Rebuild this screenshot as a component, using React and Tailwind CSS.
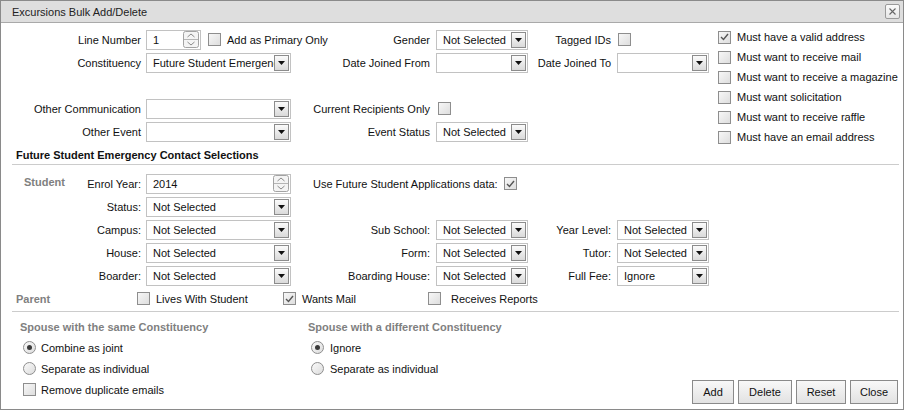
import React from 'react';

// Excursions Bulk Add/Delete dialog - static presentational form.

const DropBtn = () => (
  <div className="flex h-[16px] w-[15px] shrink-0 items-center justify-center border border-[#8c8c8c] bg-gradient-to-b from-[#fbfbfb] to-[#dadada]">
    <svg width="7" height="4" viewBox="0 0 7 4">
      <path d="M0 0h7L3.5 4z" fill="#111" />
    </svg>
  </div>
);

const Select = ({ value = '', className = 'w-[92px]' }) => (
  <div className={`flex h-[20px] items-center border border-[#c2c2c2] bg-white pl-[6px] pr-[1px] ${className}`}>
    <span className="flex-1 overflow-hidden whitespace-nowrap">{value}</span>
    <DropBtn />
  </div>
);

const SpinBtn = () => (
  <svg width="16" height="17" viewBox="0 0 16 17" className="shrink-0">
    <rect x="0.5" y="0.5" width="15" height="16" rx="2" fill="#f4f4f4" stroke="#a3a3a3" />
    <line x1="1" y1="8.5" x2="15" y2="8.5" stroke="#b5b5b5" />
    <path d="M4.5 6L8 3L11.5 6" fill="none" stroke="#8a8a8a" />
    <path d="M4.5 11L8 14L11.5 11" fill="none" stroke="#8a8a8a" />
  </svg>
);

const Spinner = ({ value, className }) => (
  <div className={`flex h-[20px] items-center border border-[#c2c2c2] bg-white pl-[6px] pr-[1px] ${className}`}>
    <span className="flex-1 whitespace-nowrap">{value}</span>
    <SpinBtn />
  </div>
);

const Check = ({ checked, className = '' }) => (
  <div className={`flex h-[13px] w-[13px] shrink-0 items-center justify-center border border-[#8e8e8e] bg-gradient-to-br from-[#f7f7f7] to-[#dedede] ${className}`}>
    {checked && (
      <svg width="9" height="8" viewBox="0 0 9 8">
        <path d="M1 4l2.5 2.5L8 1" fill="none" stroke="#555" strokeWidth="1.4" />
      </svg>
    )}
  </div>
);

const Radio = ({ checked }) => (
  <div className="flex h-[13px] w-[13px] shrink-0 items-center justify-center rounded-full border border-[#8e8e8e] bg-gradient-to-br from-[#fafafa] to-[#dcdcdc]">
    {checked && <div className="h-[5px] w-[5px] rounded-full bg-[#3a3a3a]" />}
  </div>
);

const Row = ({ children }) => (
  <div className="grid h-[23px] grid-cols-[145px_145px_145px_92px_89px_92px] items-center">{children}</div>
);

const L1 = ({ children }) => <div className="whitespace-nowrap pr-[5px] text-right">{children}</div>;
const L = ({ children }) => <div className="whitespace-nowrap pr-[6px] text-right">{children}</div>;

const musts = [
  ['Must have a valid address', true],
  ['Must want to receive mail', false],
  ['Must want to receive a magazine', false],
  ['Must want solicitation', false],
  ['Must want to receive raffle', false],
  ['Must have an email address', false],
];

export default function App() {
  return (
    <div className="flex h-[410px] w-[904px] flex-col border border-[#8a8a8a] bg-white font-['Liberation_Sans',Arial,sans-serif] text-[11px] leading-[14px] text-[#111]">
      {/* Title bar */}
      <div className="flex h-[22px] shrink-0 items-center justify-between border-b border-[#a9a9a9] bg-[#dedede] pl-[11px] pr-[3px]">
        <span className="text-[#222]">Excursions Bulk Add/Delete</span>
        <div className="flex h-[15px] w-[15px] items-center justify-center rounded-[2px] border border-[#9a9a9a] bg-gradient-to-b from-[#fbfbfb] to-[#e6e6e6]">
          <svg width="7" height="7" viewBox="0 0 7 7">
            <path d="M0.5 0.5l6 6M6.5 0.5l-6 6" stroke="#666" strokeWidth="1.1" />
          </svg>
        </div>
      </div>

      {/* Top filters */}
      <div className="flex">
        <div className="w-[708px] shrink-0 pt-[5px]">
          <Row>
            <L1>Line Number</L1>
            <div className="flex items-center whitespace-nowrap">
              <Spinner value="1" className="w-[55px] shrink-0" />
              <Check className="ml-[7px]" />
              <span className="ml-[6px]">Add as Primary Only</span>
            </div>
            <L>Gender</L>
            <Select value="Not Selected" />
            <L>Tagged IDs</L>
            <Check className="ml-[1px]" />
          </Row>
          <Row>
            <L1>Constituency</L1>
            <Select value="Future Student Emergency Contact" className="w-[145px]" />
            <L>Date Joined From</L>
            <Select />
            <L>Date Joined To</L>
            <Select />
          </Row>
          <Row />
          <Row>
            <L1>Other Communication</L1>
            <Select className="w-[145px]" />
            <L>Current Recipients Only</L>
            <Check className="ml-[2px]" />
          </Row>
          <Row>
            <L1>Other Event</L1>
            <Select className="w-[145px]" />
            <L>Event Status</L>
            <Select value="Not Selected" />
          </Row>
        </div>
        <div className="flex flex-col pl-[9px] pt-[4px]">
          {musts.map(([t, c]) => (
            <div key={t} className="flex h-[20px] items-center gap-[6px] whitespace-nowrap">
              <Check checked={c} />
              <span>{t}</span>
            </div>
          ))}
        </div>
      </div>

      {/* Section header */}
      <div className="ml-[11px] mr-[4px] h-[18px] border-b border-[#cccccc] pl-[4px] pt-[1px] font-bold">
        Future Student Emergency Contact Selections
      </div>

      {/* Student */}
      <div className="mt-[7px]">
        <Row>
          <div className="flex h-full items-start justify-between">
            <span className="pl-[23px] pt-[3px] font-bold text-[#808080]">Student</span>
            <span className="self-center pr-[5px]">Enrol Year:</span>
          </div>
          <Spinner value="2014" className="w-[145px]" />
          <div className="col-span-2 flex items-center gap-[6px] whitespace-nowrap pl-[22px]">
            <span>Use Future Student Applications data:</span>
            <Check checked />
          </div>
        </Row>
        <Row>
          <L1>Status:</L1>
          <Select value="Not Selected" className="w-[145px]" />
        </Row>
        <Row>
          <L1>Campus:</L1>
          <Select value="Not Selected" className="w-[145px]" />
          <L>Sub School:</L>
          <Select value="Not Selected" />
          <L>Year Level:</L>
          <Select value="Not Selected" />
        </Row>
        <Row>
          <L1>House:</L1>
          <Select value="Not Selected" className="w-[145px]" />
          <L>Form:</L>
          <Select value="Not Selected" />
          <L>Tutor:</L>
          <Select value="Not Selected" />
        </Row>
        <Row>
          <L1>Boarder:</L1>
          <Select value="Not Selected" className="w-[145px]" />
          <L>Boarding House:</L>
          <Select value="Not Selected" />
          <L>Full Fee:</L>
          <Select value="Ignore" />
        </Row>
        <div className="flex h-[23px] items-center whitespace-nowrap">
          <span className="w-[136px] pl-[15px] font-bold text-[#808080]">Parent</span>
          <div className="flex w-[146px] items-center gap-[6px]">
            <Check />
            <span>Lives With Student</span>
          </div>
          <div className="flex w-[145px] items-center gap-[6px]">
            <Check checked />
            <span>Wants Mail</span>
          </div>
          <div className="flex items-center gap-[10px]">
            <Check />
            <span>Receives Reports</span>
          </div>
        </div>
      </div>

      {/* Spouse options and actions */}
      <div className="ml-[11px] mr-[4px] mt-[1px] flex flex-1 border-t border-[#cccccc]">
        <div className="w-[296px] pl-[8px] pt-[8px]">
          <div className="font-bold text-[#808080]">Spouse with the same Constituency</div>
          <div className="mt-[3px] flex h-[21px] items-center gap-[5px] pl-[3px]">
            <Radio checked />
            <span>Combine as joint</span>
          </div>
          <div className="flex h-[21px] items-center gap-[5px] pl-[3px]">
            <Radio />
            <span>Separate as individual</span>
          </div>
          <div className="flex h-[21px] items-center gap-[5px] pl-[3px]">
            <Check />
            <span>Remove duplicate emails</span>
          </div>
        </div>
        <div className="flex-1 pt-[8px]">
          <div className="font-bold text-[#808080]">Spouse with a different Constituency</div>
          <div className="mt-[3px] flex h-[21px] items-center gap-[6px] pl-[3px]">
            <Radio checked />
            <span>Ignore</span>
          </div>
          <div className="flex h-[21px] items-center gap-[6px] pl-[3px]">
            <Radio />
            <span>Separate as individual</span>
          </div>
        </div>
        <div className="flex items-end gap-[4px] pb-[5px] pr-[1px]">
          {[
            ['Add', 'w-[42px]'],
            ['Delete', 'w-[54px]'],
            ['Reset', 'w-[50px]'],
            ['Close', 'w-[48px]'],
          ].map(([t, w]) => (
            <button
              key={t}
              className={`h-[24px] ${w} border border-[#8a8a8a] bg-gradient-to-b from-[#f8f8f8] to-[#e2e2e2] text-[11px] text-[#111]`}
            >
              {t}
            </button>
          ))}
        </div>
      </div>
    </div>
  );
}
